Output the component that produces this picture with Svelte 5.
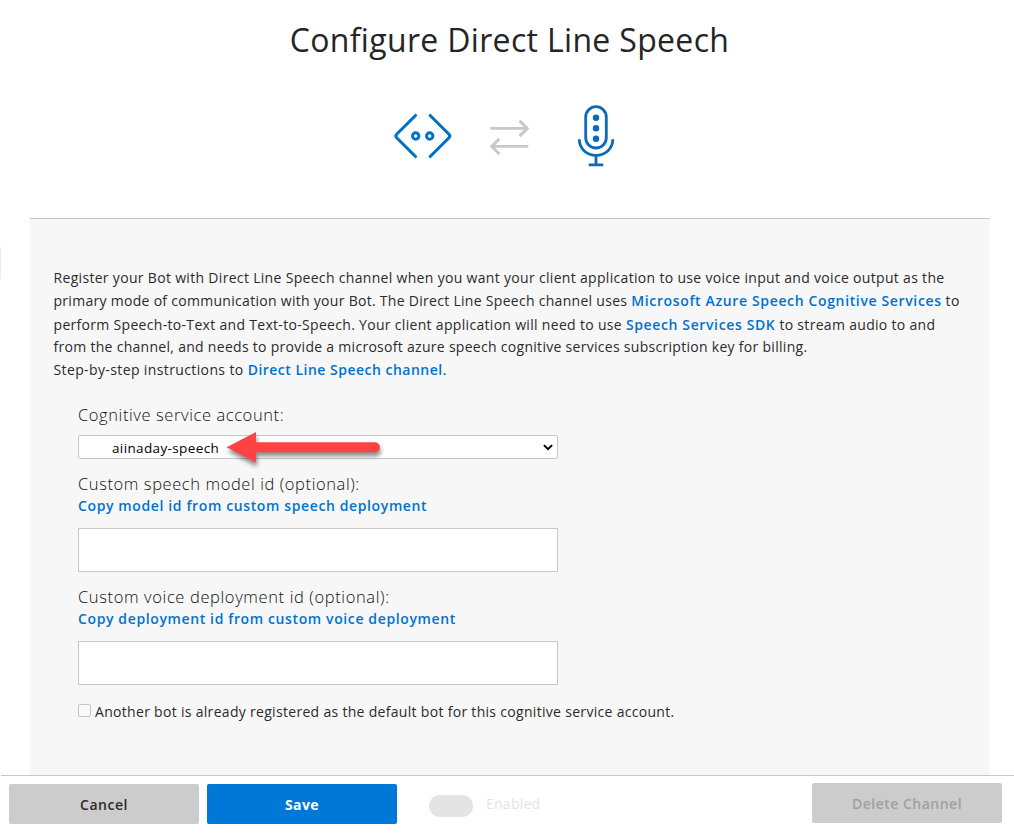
<script>
  let account = $state('aiinaday-speech');
  let modelId = $state('');
  let deploymentId = $state('');
</script>

<div class="page">
  <span class="edge"></span>
  <header>
    <h1>Configure Direct Line Speech</h1>
    <div class="icons">
      <svg class="bot" width="60" height="50" viewBox="0 0 60 50" fill="none" stroke="#0072c6">
        <path d="M22.5 5.5 3.9 24q-2 2 0 4L22.5 46.5M37.2 5.5 55.8 24q2 2 0 4L37.2 46.5" stroke-width="3.1" stroke-linecap="round" />
        <circle cx="22.7" cy="26" r="3.2" stroke-width="3" />
        <circle cx="36.7" cy="26" r="3.2" stroke-width="3" />
      </svg>
      <svg class="swap" width="40" height="40" viewBox="0 0 40 40" fill="none" stroke="#c8c8c8" stroke-width="2.7">
        <path d="M.3 10.4H37M3 28.4H38.3" />
        <path d="M29.5 2.7 37.3 10.4 29.5 18.1M9.4 20.7 1.8 28.4 9.4 36.2" stroke-width="3" />
      </svg>
      <svg class="mic" width="40" height="64" viewBox="0 0 40 64" fill="none" stroke="#0b6ab9" stroke-width="2.8">
        <rect x="9.7" y="2.7" width="20.6" height="41.3" rx="10.3" />
        <path d="M3.3 35.3C3.3 45 11 51.3 20 51.3S36.8 45 36.8 35.3M20 51.3V61M12.7 60.9H27.3" />
        <g fill="#0b6ab9" stroke="none">
          <circle cx="20" cy="13.7" r="3.2" />
          <circle cx="20" cy="24.3" r="3.2" />
          <circle cx="20" cy="34.8" r="3.2" />
        </g>
      </svg>
    </div>
  </header>

  <main>
    <div class="intro">
      <div class="first">Register your Bot with Direct Line Speech channel when you want your client application to use voice input and voice output as the</div>
      <div class="tall">primary mode of communication with your Bot. The Direct Line Speech channel uses <a href="#azure">Microsoft Azure Speech Cognitive Services</a> to</div>
      <div class="short">perform Speech-to-Text and Text-to-Speech. Your client application will need to use <a href="#sdk">Speech Services SDK</a> to stream audio to and</div>
      <div class="billing">from the channel, and needs to provide a microsoft azure speech cognitive services subscription key for billing.</div>
      <div class="steps">Step-by-step instructions to <a href="#channel">Direct Line Speech channel</a>.</div>
    </div>

    <form>
      <label for="account">Cognitive service account:</label>
      <div class="select">
        <select id="account" bind:value={account}>
          <option>aiinaday-speech</option>
        </select>
        <svg class="chevron" width="10" height="7" viewBox="0 0 10 7" fill="none" stroke="#000" stroke-width="2">
          <path d="M.9 1.1 5 5.1 9.1 1.1" />
        </svg>
        <svg class="pointer" width="170" height="50" viewBox="0 0 170 50" fill="#ff4343">
          <path d="M6.5 22.3 36 7V17.3H155a5 5 0 0 1 0 10H36V37.5Z" />
        </svg>
      </div>

      <label for="model">Custom speech model id (optional):</label>
      <a href="#model">Copy model id from custom speech deployment</a>
      <input id="model" type="text" bind:value={modelId} />

      <label for="deployment" class="wide">Custom voice deployment id (optional):</label>
      <a href="#deployment">Copy deployment id from custom voice deployment</a>
      <input id="deployment" type="text" bind:value={deploymentId} />

      <div class="check">
        <span class="box"></span>
        <span>Another bot is already registered as the default bot for this cognitive service account.</span>
      </div>
    </form>
  </main>

  <footer>
    <button class="cancel">Cancel</button>
    <button class="save">Save</button>
    <span class="toggle"></span>
    <span class="enabled">Enabled</span>
    <button class="delete" disabled>Delete Channel</button>
  </footer>
</div>

<style>
  :global(body) { background: #fff; overflow: hidden; }
  .page {
    position: relative;
    box-sizing: border-box;
    width: 1014px;
    height: 836px;
    display: flex;
    flex-direction: column;
    font: 400 14px/23px 'Open Sans', sans-serif;
    letter-spacing: .3px;
    color: #2b2b2b;
  }
  .edge { position: absolute; left: 0; top: 247px; width: 1px; height: 32px; background: #eaeaea; }
  header { height: 218px; box-sizing: border-box; padding: 18px 5px 0 10px; }
  h1 { margin: 0; text-align: center; font-size: 32px; line-height: 44px; font-weight: 400; letter-spacing: .33px; color: #252525; }
  .icons { display: flex; padding-left: 383px; margin-top: 42px; }
  .bot { margin-top: 6px; }
  .swap { margin: 14px 0 0 37px; }
  .mic { margin-left: 46px; }
  svg { display: block; flex: none; }

  main {
    flex: 1;
    margin: 0 24px 0 30px;
    box-sizing: border-box;
    border-top: 1px solid #c8c8c8;
    background: #f7f7f7;
    padding: 47px 23px 0 23.5px;
  }
  .intro > div { height: 23px; white-space: pre; }
  .intro .first { letter-spacing: .315px; }
  .intro .tall { height: 24px; letter-spacing: .29px; }
  .intro .short { height: 22px; letter-spacing: .31px; }
  .intro .billing { letter-spacing: .29px; }
  .intro .steps { letter-spacing: .38px; }
  a { color: #0072d0; font-weight: 600; text-decoration: none; letter-spacing: .63px; }
  .intro .tall a { letter-spacing: .64px; }
  .steps a { letter-spacing: .49px; }

  form { display: flex; flex-direction: column; align-items: flex-start; padding: 23px 0 0 24.5px; }
  label { font-size: 16.5px; font-weight: 300; line-height: 22px; height: 22px; letter-spacing: .59px; white-space: nowrap; color: #111; }
  .wide { letter-spacing: .62px; }
  form a { line-height: 22px; height: 22px; letter-spacing: .62px; white-space: nowrap; }
  .select { position: relative; width: 480px; height: 24px; margin: 9px 0 14px; }
  select {
    appearance: none;
    display: block;
    box-sizing: border-box;
    width: 100%;
    height: 24px;
    margin: 0;
    padding: 1px 24px 0 33px;
    border: 1px solid #c8c8c8;
    border-radius: 2px;
    background: #fff;
    color: #000;
    font: 400 13.5px/20px 'Open Sans', sans-serif;
    letter-spacing: .37px;
  }
  .chevron { position: absolute; right: 5px; top: 9px; }
  .pointer { position: absolute; left: 142px; top: -10px; filter: drop-shadow(1px 4px 2px rgba(0, 0, 0, .45)); }
  input {
    box-sizing: border-box;
    width: 480px;
    height: 44px;
    margin: 11px 0 14px;
    padding: 0 8px;
    border: 1px solid #c8c8c8;
    border-radius: 0;
    background: #fff;
    font: inherit;
  }
  .check { display: flex; margin-top: 1px; gap: 4px; white-space: nowrap; letter-spacing: .305px; }
  .box { box-sizing: border-box; width: 13px; height: 13px; margin-top: 4px; border: 1px solid #c5c5c5; border-radius: 2px; background: #f9f9f9; }

  footer {
    box-sizing: border-box;
    height: 61px;
    margin-left: 1px;
    border-top: 1px solid #c8c8c8;
    padding: 8px 12px 0 8px;
    display: flex;
    align-items: flex-start;
  }
  button {
    box-sizing: border-box;
    width: 190px;
    height: 40px;
    padding: 2px 0 0;
    border: 0;
    border-radius: 2px;
    background: #ccc;
    color: #2b2b2b;
    font: 600 14px/38px 'Open Sans', sans-serif;
    letter-spacing: .5px;
  }
  .save { margin-left: 8px; background: #0078d7; color: #fff; font-weight: 700; letter-spacing: .4px; }
  .toggle { width: 44px; height: 22px; margin: 11px 0 0 32px; border-radius: 11px; background: #e4e4e4; }
  .enabled { margin: 8px 0 0 13px; color: #e4e4e4; letter-spacing: .25px; }
  .delete { margin: -1px 0 0 auto; color: #a0a0a0; }
</style>
